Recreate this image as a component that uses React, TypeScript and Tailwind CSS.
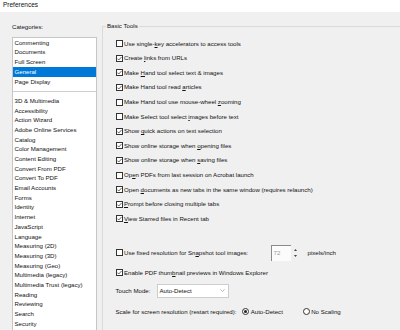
import React from 'react';

const topCategories = ['Commenting', 'Documents', 'Full Screen', 'General', 'Page Display'];

const moreCategories = [
  '3D & Multimedia',
  'Accessibility',
  'Action Wizard',
  'Adobe Online Services',
  'Catalog',
  'Color Management',
  'Content Editing',
  'Convert From PDF',
  'Convert To PDF',
  'Email Accounts',
  'Forms',
  'Identity',
  'Internet',
  'JavaScript',
  'Language',
  'Measuring (2D)',
  'Measuring (3D)',
  'Measuring (Geo)',
  'Multimedia (legacy)',
  'Multimedia Trust (legacy)',
  'Reading',
  'Reviewing',
  'Search',
  'Security',
];

// "~" marks the access key (underlined letter)
const basicTools = [
  { label: 'Use single-~key accelerators to access tools', checked: false },
  { label: 'Create ~links from URLs', checked: true },
  { label: 'Make ~Hand tool select text & images', checked: true },
  { label: 'Make Hand tool read ~articles', checked: true },
  { label: 'Make Hand tool use mouse-wheel ~zooming', checked: false },
  { label: 'Make Select tool select ~images before text', checked: false },
  { label: 'Show ~quick actions on text selection', checked: true },
  { label: 'Show online storage when ~opening files', checked: true },
  { label: 'Show online storage when ~saving files', checked: true },
  { label: 'Op~en PDFs from last session on Acrobat launch', checked: false },
  { label: 'Open ~documents as new tabs in the same window (requires relaunch)', checked: true },
  { label: '~Prompt before closing multiple tabs', checked: true },
  { label: '~View Starred files in Recent tab', checked: true },
];

const AccessLabel = ({ text }: { text: string }) => {
  const i = text.indexOf('~');
  if (i < 0) return <span>{text}</span>;
  return (
    <span className="whitespace-nowrap">
      {text.slice(0, i)}
      <span className="underline decoration-[0.6px] underline-offset-[1px]">{text[i + 1]}</span>
      {text.slice(i + 2)}
    </span>
  );
};

const Checkbox = ({ checked }: { checked: boolean }) => (
  <span className="w-[7px] h-[7px] shrink-0 bg-white border border-[#333] flex items-center justify-center">
    {checked && (
      <svg width="5" height="5" viewBox="0 0 5 5">
        <path d="M0.4 2.6 L1.8 4 L4.6 0.9" fill="none" stroke="#333" strokeWidth="0.75" />
      </svg>
    )}
  </span>
);

const Radio = ({ checked }: { checked: boolean }) => (
  <span className="w-[7px] h-[7px] shrink-0 rounded-full bg-white border border-[#333] flex items-center justify-center">
    {checked && <span className="w-[3px] h-[3px] rounded-full bg-[#222]" />}
  </span>
);

const App = () => {
  return (
    <div className="w-[400px] h-[330px] overflow-hidden bg-[#f0f0f0] text-[#111] font-['Liberation_Sans',Arial,sans-serif] text-[6.1px] leading-none flex flex-col">
      {/* Title */}
      <div className="h-[12px] shrink-0 bg-white pl-[3px] pt-[2px] text-[6.5px] leading-[6px]">Preferences</div>

      <div className="flex flex-1 min-h-0">
        {/* Categories */}
        <div className="w-[102px] shrink-0 pl-[12px] flex flex-col">
          <div className="mt-[10.5px] h-[8px] leading-[8px]">Categories:</div>
          <div className="mt-[6.5px] w-[85px] h-[400px] shrink-0 bg-white border border-[#c6c6c6]">
            {topCategories.map((c) => (
              <div
                key={c}
                className={`h-[9.7px] flex items-center pl-[1.5px] whitespace-nowrap ${
                  c === 'General' ? 'bg-[#0078d7] text-white' : ''
                }`}
              >
                {c}
              </div>
            ))}
            <div className="h-[9.7px] flex items-center">
              <div className="h-px w-full bg-[#cfcfcf]" />
            </div>
            {moreCategories.map((c) => (
              <div key={c} className="h-[9.7px] flex items-center pl-[1.5px] whitespace-nowrap">
                {c}
              </div>
            ))}
          </div>
        </div>

        {/* Basic Tools */}
        <fieldset className="flex-1 mt-[10px] border-t border-l border-[#dadada] min-w-0">
          <legend className="ml-[3px] px-[1px] h-[8px] leading-[8px]">Basic Tools</legend>
          <div className="pt-[6.4px] pl-[12.5px]">
            {basicTools.map((o) => (
              <div key={o.label} className="h-[14.6px] flex items-center gap-[1.5px]">
                <Checkbox checked={o.checked} />
                <AccessLabel text={o.label} />
              </div>
            ))}

            <div className="mt-[18.3px] h-[17px] flex items-center">
              <div className="w-[155px] flex items-center gap-[1.5px]">
                <Checkbox checked={false} />
                <AccessLabel text="Use fixed resolution for Sn~apshot tool images:" />
              </div>
              <div className="w-[20px] h-[16px] bg-[#fbfbfb] border-l border-t border-[#8a8a8a] flex items-center pl-[2px] text-[#9a9a9a]">
                72
              </div>
              <div className="w-[10px] h-[16px] flex flex-col items-center justify-center gap-[4px]">
                <svg width="3" height="2" viewBox="0 0 3 2">
                  <path d="M0 2 L1.5 0 L3 2 Z" fill="#444" />
                </svg>
                <svg width="3" height="2" viewBox="0 0 3 2">
                  <path d="M0 0 L1.5 2 L3 0 Z" fill="#444" />
                </svg>
              </div>
              <span className="ml-[7px]">pixels/inch</span>
            </div>

            <div className="mt-[3.9px] h-[14.6px] flex items-center gap-[1.5px]">
              <Checkbox checked={true} />
              <AccessLabel text="Enable PDF thum~bnail previews in Windows Explorer" />
            </div>

            <div className="mt-[4px] h-[14px] flex items-center">
              <span className="w-[41px]">Touch Mode:</span>
              <div className="w-[72px] h-[13.5px] bg-white border border-[#cdcdcd] flex items-center pl-[2px] pr-[3px] justify-between">
                <span>Auto-Detect</span>
                <svg width="5" height="3" viewBox="0 0 5 3">
                  <path d="M0.4 0.4 L2.5 2.5 L4.6 0.4" fill="none" stroke="#9a9a9a" strokeWidth="0.7" />
                </svg>
              </div>
            </div>

            <div className="mt-[6.4px] h-[14.6px] flex items-center">
              <span className="w-[126.7px] whitespace-nowrap">Scale for screen resolution (restart required):</span>
              <Radio checked={true} />
              <span className="ml-[1.5px] w-[52.5px]">Auto-Detect</span>
              <Radio checked={false} />
              <span className="ml-[1px]">No Scaling</span>
            </div>
          </div>
        </fieldset>
      </div>
    </div>
  );
};

export default App;
